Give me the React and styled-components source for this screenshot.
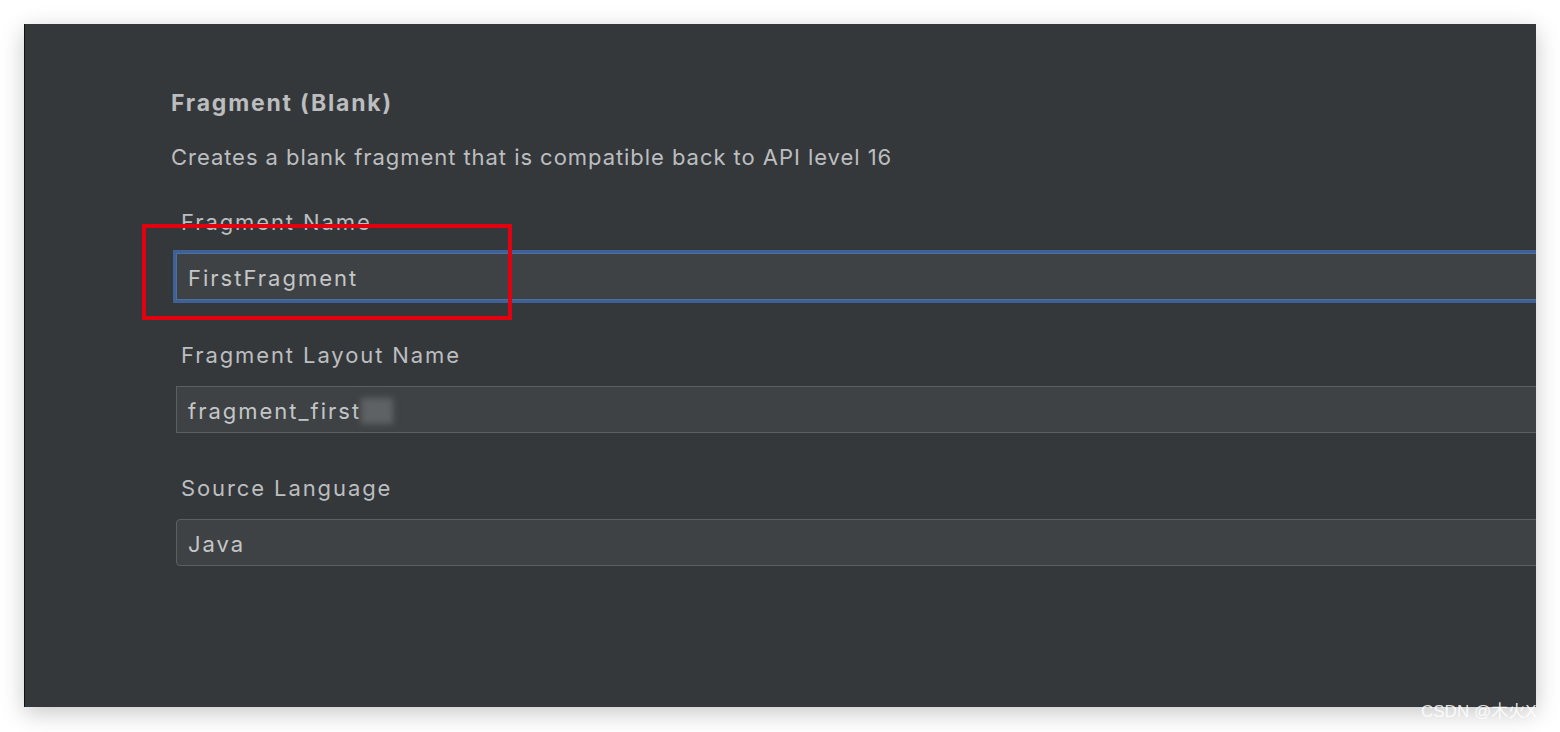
import React from "react";
import styled, { createGlobalStyle } from "styled-components";

const GlobalStyle = createGlobalStyle`
  html, body {
    margin: 0;
    padding: 0;
    background: #ffffff;
  }
  body {
    font-family: "Inter", "Open Sans", "Noto Sans CJK SC", sans-serif;
  }
`;

const Page = styled.div`
  width: 1560px;
  height: 732px;
  padding: 24px 24px 25px 24px;
  box-sizing: border-box;
  position: relative;
  overflow: hidden;
`;

const Panel = styled.div`
  height: 100%;
  background: #35383b;
  border-left: 1px solid #111213;
  box-shadow: 0 6px 22px rgba(0, 0, 0, 0.22);
  padding: 65px 0 0 146px;
  box-sizing: border-box;
  overflow: hidden;
  color: #bcbec0;
`;

const Title = styled.h1`
  margin: 0;
  font-size: 23px;
  line-height: 28px;
  font-weight: 700;
  letter-spacing: 1.8px;
  color: #bbbdbf;
`;

const Description = styled.p`
  margin: 26px 0 39px 0;
  font-size: 22px;
  line-height: 28px;
  letter-spacing: 0.95px;
  color: #bcbec0;
`;

const Field = styled.div`
  position: relative;
  margin: 0 0 43px 5px;
`;

const Label = styled.div`
  font-size: 22px;
  line-height: 24px;
  letter-spacing: 1.9px;
  margin-left: 5px;
  margin-bottom: 19px;
  color: #bcbec0;
`;

const Input = styled.div`
  height: 47px;
  width: 1500px;
  box-sizing: border-box;
  display: flex;
  align-items: center;
  padding-left: 11px;
  padding-top: 2px;
  font-size: 22px;
  letter-spacing: 2px;
  color: #c4c6c8;
  background: #3f4244;
  border: 1px solid ${(p) => (p.$focused ? "#4b6fa3" : "#5d6062")};
  border-radius: ${(p) => (p.$rounded ? "4px" : "0")};
  box-shadow: ${(p) => (p.$focused ? "0 0 0 3px #3f6196" : "none")};
`;

const Blur = styled.span`
  display: inline-block;
  width: 32px;
  height: 26px;
  background: #5f6264;
  filter: blur(3px);
`;

const Highlight = styled.div`
  position: absolute;
  left: -34px;
  top: 14px;
  width: 370px;
  height: 96px;
  box-sizing: border-box;
  border: 4px solid #e3000f;
  pointer-events: none;
`;

const Watermark = styled.div`
  position: absolute;
  left: 1421px;
  top: 700px;
  font-family: "Liberation Sans", "Noto Sans CJK SC", sans-serif;
  font-size: 17px;
  line-height: 24px;
  color: rgba(255, 255, 255, 0.85);
  white-space: nowrap;
`;

const App = () => {
  return (
    <>
      <GlobalStyle />
      <Page>
        <Panel>
          <Title>Fragment (Blank)</Title>
          <Description>
            Creates a blank fragment that is compatible back to API level 16
          </Description>

          <Field>
            <Label>Fragment Name</Label>
            <Input $focused>FirstFragment</Input>
            <Highlight />
          </Field>

          <Field>
            <Label>Fragment Layout Name</Label>
            <Input>
              fragment_first
              <Blur />
            </Input>
          </Field>

          <Field>
            <Label>Source Language</Label>
            <Input $rounded>Java</Input>
          </Field>
        </Panel>
        <Watermark>CSDN @木火X</Watermark>
      </Page>
    </>
  );
};

export default App;
